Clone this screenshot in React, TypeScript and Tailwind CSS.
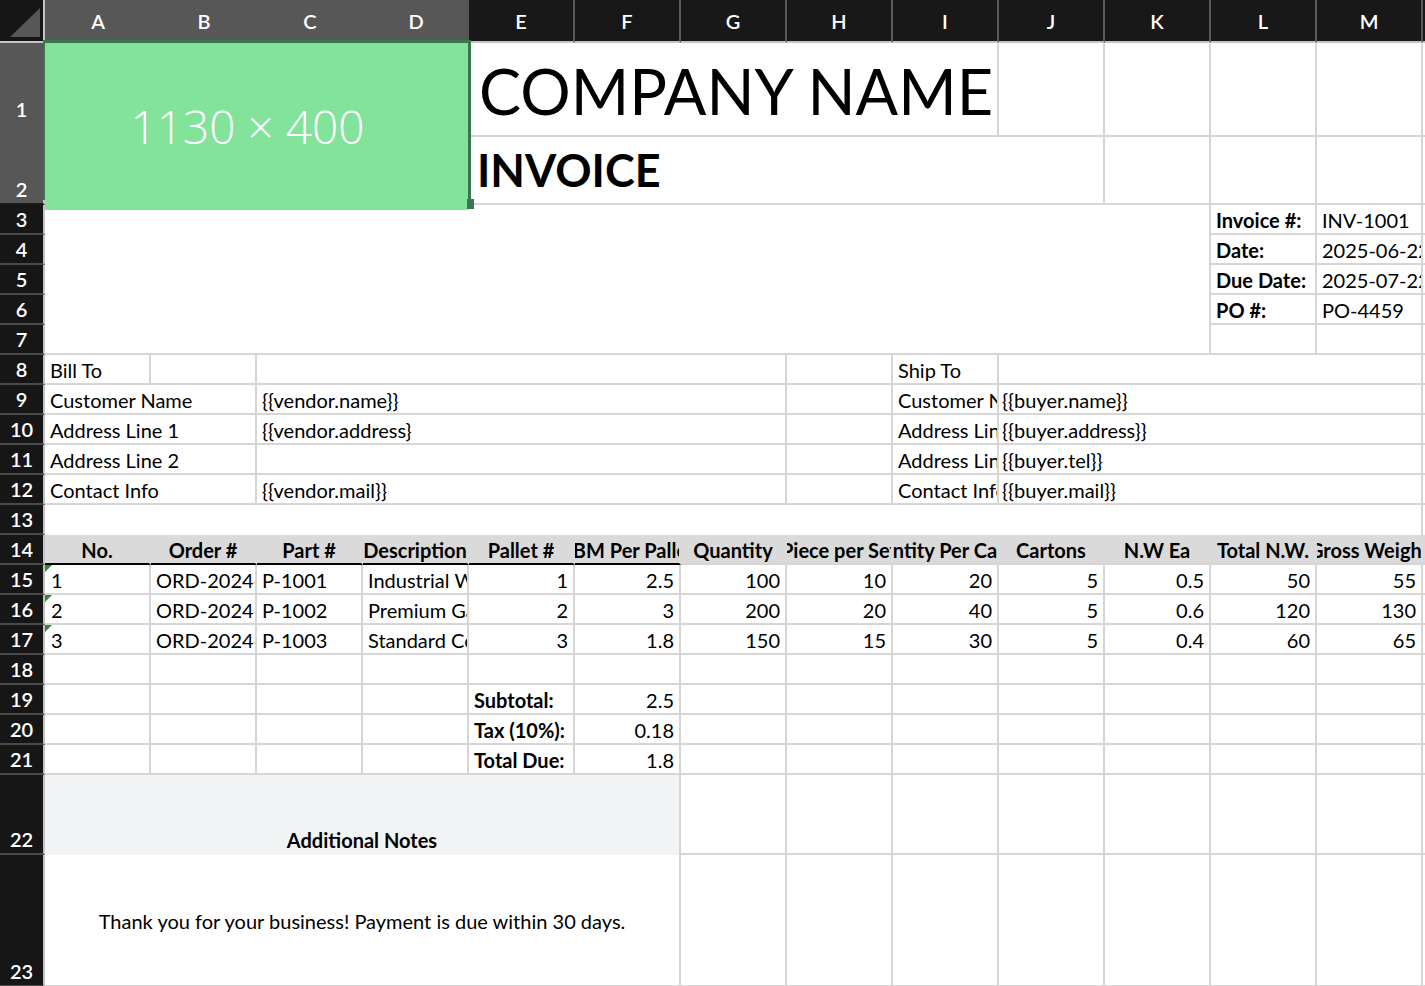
import React from 'react';
import clsx from 'clsx';

const LETTERS = ['A', 'B', 'C', 'D', 'E', 'F', 'G', 'H', 'I', 'J', 'K', 'L', 'M', 'N'];

const GRID = 'border-r-2 border-b-2 border-[#d6d6d6]';

interface CellProps {
  children?: React.ReactNode;
  className?: string;
  edge?: string;
  align?: 'left' | 'right' | 'center';
  bold?: boolean;
}

const Cell: React.FC<CellProps> = ({ children, className, edge = GRID, align = 'left', bold }) => (
  <div
    className={clsx(
      'relative flex items-center overflow-hidden whitespace-nowrap px-[5px] pt-[2px] text-[20px] text-black',
      edge,
      align === 'right' && 'justify-end',
      align === 'center' && 'justify-center',
      bold && 'font-bold',
      className,
    )}
  >
    {children !== undefined && <span className="shrink-0">{children}</span>}
  </div>
);

const RowHead: React.FC<{ n: number }> = ({ n }) => (
  <div className="flex items-end justify-center border-r-2 border-b-2 border-r-[#c4c4c4] border-b-[#4a4a4a] bg-[#161616] text-[20px] font-semibold text-white">
    <span className="flex h-[28px] items-center">{n}</span>
  </div>
);

const lineItems = [
  ['1', 'ORD-2024-001', 'P-1001', 'Industrial Widget', '1', '2.5', '100', '10', '20', '5', '0.5', '50', '55'],
  ['2', 'ORD-2024-002', 'P-1002', 'Premium Gadget', '2', '3', '200', '20', '40', '5', '0.6', '120', '130'],
  ['3', 'ORD-2024-003', 'P-1003', 'Standard Component', '3', '1.8', '150', '15', '30', '5', '0.4', '60', '65'],
];

const itemHeaders = [
  'No.', 'Order #', 'Part #', 'Description', 'Pallet #', 'CBM Per Pallet', 'Quantity',
  'Piece per Set', 'Quantity Per Carton', 'Cartons', 'N.W Ea', 'Total N.W.', 'Gross Weight', '',
];

const meta = [
  ['Invoice #:', 'INV-1001'],
  ['Date:', '2025-06-22'],
  ['Due Date:', '2025-07-22'],
  ['PO #:', 'PO-4459'],
  ['', ''],
];

const billTo = [
  ['Customer Name', '{{vendor.name}}', 'Customer Name', '{{buyer.name}}'],
  ['Address Line 1', '{{vendor.address}', 'Address Line 1', '{{buyer.address}}'],
  ['Address Line 2', '', 'Address Line 2', '{{buyer.tel}}'],
  ['Contact Info', '{{vendor.mail}}', 'Contact Info', '{{buyer.mail}}'],
];

const totals = [
  ['Subtotal:', '2.5'],
  ['Tax (10%):', '0.18'],
  ['Total Due:', '1.8'],
];

const blanks = (count: number, key: string) =>
  Array.from({ length: count }, (_, i) => <Cell key={`${key}-${i}`} />);

export default function App() {
  return (
    <div className="h-[986px] w-[1425px] overflow-hidden bg-white font-[Lato,sans-serif]">
      <div className="grid grid-cols-[45px_repeat(14,106px)] grid-rows-[43px_94px_68px_repeat(19,30px)_80px_132px]">
        {/* column letters */}
        <div className="relative border-r-2 border-b-2 border-[#c4c4c4] bg-[#161616]">
          <div className="absolute right-[3px] bottom-[4px] h-[29px] w-[30px] bg-[#575757] [clip-path:polygon(100%_0,100%_100%,0_100%)]" />
        </div>
        {LETTERS.map((l, i) => (
          <div
            key={l}
            className={clsx(
              'flex items-center justify-center border-b-2 border-b-[#c4c4c4] text-[20px] font-semibold text-white',
              i < 4 ? 'bg-[#575757]' : 'border-r-2 border-r-[#5a5a5a] bg-[#181818]',
            )}
          >
            {l}
          </div>
        ))}

        {/* rows 1-2 */}
        <div className="row-span-2 flex flex-col border-r-2 border-b-2 border-r-[#c4c4c4] border-b-[#1a1a1a] bg-[#575757] text-[20px] font-semibold text-white">
          <div className="flex h-[94px] items-end justify-center pb-[13px]">
            <span className="flex h-[30px] items-center">1</span>
          </div>
          <div className="flex flex-1 items-end justify-center">
            <span className="flex h-[28px] items-center">2</span>
          </div>
        </div>
        <div className="relative col-span-4 row-span-2">
          <div className="absolute top-0 left-0 z-10 flex h-[167px] w-[423px] items-center justify-center bg-[#83e39b] pr-[18px]">
            <span className="font-['Open_Sans',sans-serif] text-[46px] font-light text-white">1130 × 400</span>
          </div>
          <div className="absolute top-[-3px] left-[-2px] z-20 h-[160px] w-[428px] border-t-[3px] border-r-[3px] border-l-2 border-[#3b7650]" />
          <div className="absolute top-[156px] left-[422px] z-20 h-[10px] w-[7px] bg-[#3b7650]" />
        </div>
        <Cell className="col-span-5 pt-[5px] pl-[10px] text-[63px]">COMPANY NAME</Cell>
        {blanks(5, 'r1')}
        <Cell className="col-span-6 pl-[8px] text-[45px]" bold>
          INVOICE
        </Cell>
        {blanks(4, 'r2')}

        {/* rows 3-7: invoice meta */}
        {meta.map(([label, value], i) => (
          <React.Fragment key={`meta-${i}`}>
            <RowHead n={3 + i} />
            {i === 0 && <div className="col-span-11 row-span-5 border-r-2 border-b-2 border-[#d6d6d6]" />}
            <Cell bold>{label || undefined}</Cell>
            <Cell>{value || undefined}</Cell>
            <Cell />
          </React.Fragment>
        ))}

        {/* rows 8-12: parties */}
        <RowHead n={8} />
        <Cell>Bill To</Cell>
        <Cell />
        <Cell className="col-span-5" />
        <Cell />
        <Cell>Ship To</Cell>
        <Cell className="col-span-4" />
        <Cell />
        {billTo.map(([bl, bv, sl, sv], i) => (
          <React.Fragment key={`party-${i}`}>
            <RowHead n={9 + i} />
            <Cell className="col-span-2">{bl}</Cell>
            <Cell className="col-span-5">{bv || undefined}</Cell>
            <Cell />
            <Cell>{sl}</Cell>
            <Cell className="col-span-4 pl-[3px]">{sv}</Cell>
            <Cell />
          </React.Fragment>
        ))}

        {/* row 13 */}
        <RowHead n={13} />
        <Cell className="col-span-13" edge="border-r-2 border-[#d6d6d6]" />
        <Cell edge="" />

        {/* row 14: item headers */}
        <RowHead n={14} />
        {itemHeaders.map((h, i) => (
          <Cell
            key={`h-${i}`}
            align="center"
            bold
            edge={clsx(
              'border-r-2 border-b-2 border-r-[#dadada]',
              i < 6 ? 'border-b-black' : 'border-b-[#d6d6d6]',
            )}
            className="bg-[#dadada]"
          >
            {h || undefined}
          </Cell>
        ))}

        {/* rows 15-17: line items */}
        {lineItems.map((row, r) => (
          <React.Fragment key={`item-${r}`}>
            <RowHead n={15 + r} />
            {row.map((v, c) => (
              <Cell key={`item-${r}-${c}`} align={c < 4 ? 'left' : 'right'} className={c === 0 ? 'pl-[6px]' : undefined}>
                {c === 0 && (
                  <span className="absolute top-0 left-0 h-0 w-0 border-t-[7px] border-r-[7px] border-t-[#2f8a2f] border-r-transparent" />
                )}
                {v}
              </Cell>
            ))}
            <Cell />
          </React.Fragment>
        ))}

        {/* row 18 */}
        <RowHead n={18} />
        {blanks(14, 'r18')}

        {/* rows 19-21: totals */}
        {totals.map(([label, value], i) => (
          <React.Fragment key={`tot-${i}`}>
            <RowHead n={19 + i} />
            {blanks(4, `tl-${i}`)}
            <Cell bold>{label}</Cell>
            <Cell align="right">{value}</Cell>
            {blanks(8, `tr-${i}`)}
          </React.Fragment>
        ))}

        {/* rows 22-23: notes */}
        <RowHead n={22} />
        <Cell className="col-span-6 items-end bg-[#f2f3f5] pb-0" align="center" bold edge="border-r-2 border-[#d6d6d6]">
          Additional Notes
        </Cell>
        {blanks(8, 'r22')}
        <RowHead n={23} />
        <Cell className="col-span-6" align="center">
          Thank you for your business! Payment is due within 30 days.
        </Cell>
        {blanks(8, 'r23')}
      </div>
    </div>
  );
}
